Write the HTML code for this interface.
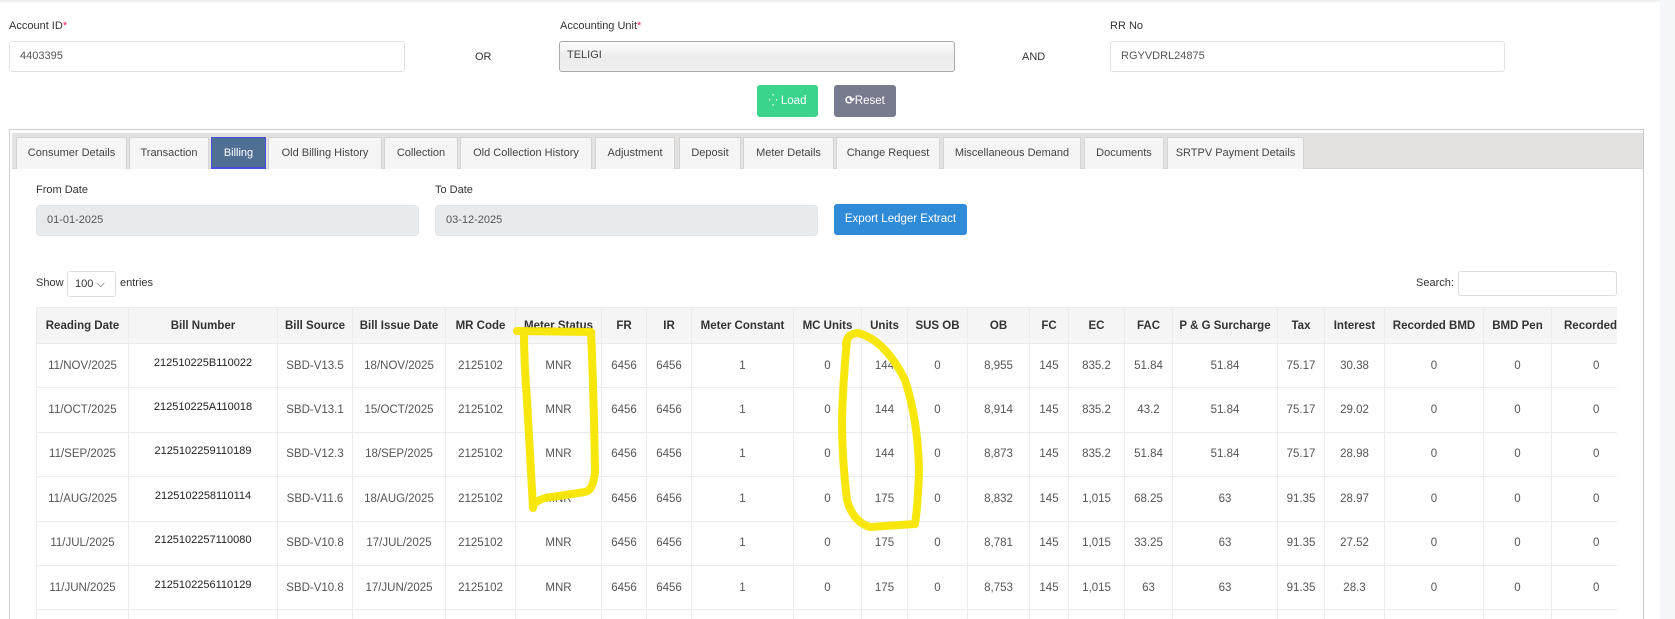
<!DOCTYPE html>
<html style="overflow:hidden;height:619px"><head><meta charset="utf-8"><style>
*{box-sizing:border-box;margin:0;padding:0}
body{width:1675px;height:619px;overflow:hidden;background:#fff;font-family:"Liberation Sans",sans-serif;color:#333;position:relative}
.a{position:absolute}
.lbl{font-size:11px;color:#333}
.req{color:#e0245e}
.inp{position:absolute;height:31px;border:1px solid #dfe3e6;border-radius:3px;background:#fff;font-size:11px;color:#555;padding-left:10px;line-height:29px}
.tab{position:absolute;top:137px;height:32px;border:1px solid #d4d4d4;border-bottom:none;background:#f5f5f5;font-size:11px;color:#444;text-align:center;line-height:30px;white-space:nowrap}
table{border-collapse:collapse;table-layout:fixed;font-size:11.5px;color:#555}
th{height:36px;background:#f5f5f5;font-weight:bold;color:#333;border:1px solid #ebebeb;font-size:11.5px;white-space:nowrap;overflow:hidden}
td{height:44.4px;border:1px solid #ebebeb;text-align:center;white-space:nowrap;overflow:hidden}
td.bn{font-size:11px;color:#222;padding-bottom:6px}
td.l{text-align:left;padding-left:41px}
</style></head><body>
<div class="a" style="left:0;top:0;width:1660px;height:2px;background:#eef0f2"></div>
<div class="a" style="left:1660px;top:0;width:15px;height:619px;background:#f5f6fa"></div>

<div class="a lbl" style="left:9px;top:20px">Account ID<span class="req">*</span></div>
<div class="inp" style="left:9px;top:41px;width:396px">4403395</div>
<div class="a lbl" style="left:475px;top:51px">OR</div>
<div class="a lbl" style="left:560px;top:20px">Accounting Unit<span class="req">*</span></div>
<div class="inp" style="left:559px;top:41px;width:396px;border-color:#a9a9a9;background:linear-gradient(#fff,#ececec 50%,#f0f0f0);color:#444;line-height:27px;padding-left:7px">TELIGI</div>
<div class="a lbl" style="left:1022px;top:51px">AND</div>
<div class="a lbl" style="left:1110px;top:20px">RR No</div>
<div class="inp" style="left:1110px;top:41px;width:395px">RGYVDRL24875</div>

<div class="a" style="left:757px;top:85px;width:61px;height:32px;background:#3ad48c;border-radius:3px;color:#fff;font-size:11.5px;line-height:32px;text-align:center">⁛ Load</div>
<div class="a" style="left:834px;top:85px;width:62px;height:32px;background:#787a8e;border-radius:3px;color:#fff;font-size:11.5px;line-height:32px;text-align:center"><b>⟳</b>Reset</div>

<div class="a" style="left:9px;top:129px;width:1635px;height:490px;border:1px solid #d0d0d0;border-bottom:none;border-right-color:#c8c8c8"></div>
<div class="a" style="left:12px;top:133px;width:1631px;height:36px;background:#e4e1e1;border-bottom:1px solid #d6d6d6"></div>
<div class="tab" style="left:16px;width:111px">Consumer Details</div>
<div class="tab" style="left:129px;width:80px">Transaction</div>
<div class="tab" style="left:211px;width:55px;background:#4f7094;color:#fff;border:1px solid #4a4ee0;border-bottom:2px solid #4a4ee0">Billing</div>
<div class="tab" style="left:268px;width:114px">Old Billing History</div>
<div class="tab" style="left:384px;width:74px">Collection</div>
<div class="tab" style="left:460px;width:132px">Old Collection History</div>
<div class="tab" style="left:595px;width:80px">Adjustment</div>
<div class="tab" style="left:679px;width:62px">Deposit</div>
<div class="tab" style="left:743px;width:91px">Meter Details</div>
<div class="tab" style="left:836px;width:104px">Change Request</div>
<div class="tab" style="left:943px;width:138px">Miscellaneous Demand</div>
<div class="tab" style="left:1084px;width:80px">Documents</div>
<div class="tab" style="left:1167px;width:137px">SRTPV Payment Details</div>

<div class="a lbl" style="left:36px;top:184px">From Date</div>
<div class="inp" style="left:36px;top:205px;width:383px;background:#e8ebee;border-color:#e2e5e8;border-radius:4px">01-01-2025</div>
<div class="a lbl" style="left:435px;top:184px">To Date</div>
<div class="inp" style="left:435px;top:205px;width:383px;background:#e8ebee;border-color:#e2e5e8;border-radius:4px">03-12-2025</div>
<div class="a" style="left:834px;top:204px;width:133px;height:31px;background:#2f8ad8;border-radius:3px;color:#fff;font-size:11.5px;line-height:31px;text-align:center">Export Ledger Extract</div>

<div class="a lbl" style="left:36px;top:277px">Show</div>
<div class="a" style="left:67px;top:271px;width:49px;height:26px;border:1px solid #ddd;border-radius:3px;font-size:11px;line-height:24px;padding-left:7px">100 ⌵</div>
<div class="a lbl" style="left:120px;top:277px">entries</div>
<div class="a lbl" style="left:1416px;top:277px">Search:</div>
<div class="a" style="left:1458px;top:271px;width:159px;height:25px;border:1px solid #ddd;border-radius:3px"></div>

<div class="a" style="left:36px;top:307px;width:1581px;height:312px;overflow:hidden">
<table style="width:1681px">
<colgroup><col style="width:92px"><col style="width:149px"><col style="width:75px"><col style="width:93px"><col style="width:70px"><col style="width:86px"><col style="width:45px"><col style="width:45px"><col style="width:102px"><col style="width:68px"><col style="width:46px"><col style="width:60px"><col style="width:62px"><col style="width:39px"><col style="width:56px"><col style="width:48px"><col style="width:105px"><col style="width:47px"><col style="width:60px"><col style="width:99px"><col style="width:68px"><col style="width:166px"></colgroup>
<tr><th>Reading Date</th><th>Bill Number</th><th>Bill Source</th><th>Bill Issue Date</th><th>MR Code</th><th>Meter Status</th><th>FR</th><th>IR</th><th>Meter Constant</th><th>MC Units</th><th>Units</th><th>SUS OB</th><th>OB</th><th>FC</th><th>EC</th><th>FAC</th><th>P &amp; G Surcharge</th><th>Tax</th><th>Interest</th><th>Recorded BMD</th><th>BMD Pen</th><th style="text-align:left;padding-left:12px">Recorded BMD</th></tr>
<tr><td>11/NOV/2025</td><td class="bn">212510225B110022</td><td>SBD-V13.5</td><td>18/NOV/2025</td><td>2125102</td><td>MNR</td><td>6456</td><td>6456</td><td>1</td><td>0</td><td>144</td><td>0</td><td>8,955</td><td>145</td><td>835.2</td><td>51.84</td><td>51.84</td><td>75.17</td><td>30.38</td><td>0</td><td>0</td><td class="l">0</td></tr>
<tr><td>11/OCT/2025</td><td class="bn">212510225A110018</td><td>SBD-V13.1</td><td>15/OCT/2025</td><td>2125102</td><td>MNR</td><td>6456</td><td>6456</td><td>1</td><td>0</td><td>144</td><td>0</td><td>8,914</td><td>145</td><td>835.2</td><td>43.2</td><td>51.84</td><td>75.17</td><td>29.02</td><td>0</td><td>0</td><td class="l">0</td></tr>
<tr><td>11/SEP/2025</td><td class="bn">2125102259110189</td><td>SBD-V12.3</td><td>18/SEP/2025</td><td>2125102</td><td>MNR</td><td>6456</td><td>6456</td><td>1</td><td>0</td><td>144</td><td>0</td><td>8,873</td><td>145</td><td>835.2</td><td>51.84</td><td>51.84</td><td>75.17</td><td>28.98</td><td>0</td><td>0</td><td class="l">0</td></tr>
<tr><td>11/AUG/2025</td><td class="bn">2125102258110114</td><td>SBD-V11.6</td><td>18/AUG/2025</td><td>2125102</td><td>MNR</td><td>6456</td><td>6456</td><td>1</td><td>0</td><td>175</td><td>0</td><td>8,832</td><td>145</td><td>1,015</td><td>68.25</td><td>63</td><td>91.35</td><td>28.97</td><td>0</td><td>0</td><td class="l">0</td></tr>
<tr><td>11/JUL/2025</td><td class="bn">2125102257110080</td><td>SBD-V10.8</td><td>17/JUL/2025</td><td>2125102</td><td>MNR</td><td>6456</td><td>6456</td><td>1</td><td>0</td><td>175</td><td>0</td><td>8,781</td><td>145</td><td>1,015</td><td>33.25</td><td>63</td><td>91.35</td><td>27.52</td><td>0</td><td>0</td><td class="l">0</td></tr>
<tr><td>11/JUN/2025</td><td class="bn">2125102256110129</td><td>SBD-V10.8</td><td>17/JUN/2025</td><td>2125102</td><td>MNR</td><td>6456</td><td>6456</td><td>1</td><td>0</td><td>175</td><td>0</td><td>8,753</td><td>145</td><td>1,015</td><td>63</td><td>63</td><td>91.35</td><td>28.3</td><td>0</td><td>0</td><td class="l">0</td></tr>
<tr><td>&nbsp;</td><td></td><td></td><td></td><td></td><td></td><td></td><td></td><td></td><td></td><td></td><td></td><td></td><td></td><td></td><td></td><td></td><td></td><td></td><td></td><td></td><td></td></tr>
</table></div>

<svg class="a" style="left:0;top:0" width="1675" height="619">
<g fill="none" stroke="#f7e600" stroke-width="8" stroke-linecap="round" stroke-linejoin="round" opacity="0.95">
<path d="M517 331 L591 332 Q594 400 595 470 Q594 490 585 492 L545 498 Q533 502 533 508 Q530 450 527 400 Q524 360 524 333"/>
<path d="M846 345 Q846 334 858 333 Q885 340 905 380 Q918 420 919 470 Q918 505 915 524 L870 527 Q853 522 847 500 Q842 460 842 420 Q843 380 847 340"/>
</g></svg>
</body></html>
